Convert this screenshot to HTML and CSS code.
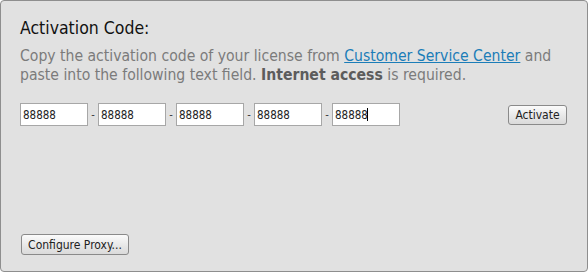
FILE: index.html
```html
<!DOCTYPE html>
<html lang="en">
<head>
  <meta charset="UTF-8" />
  <title>Activation Code</title>
  <link rel="stylesheet" href="styles.css">
</head>
<body>
  <div class="panel">
    <h1>Activation Code:</h1>
    <p class="info">Copy the activation code of your license from <a href="#">Customer Service Center</a> and paste into the following text field. <b>Internet access</b> is required.</p>

    <div class="code-row">
      <input class="code" type="text" value="88888">
      <span class="dash">-</span>
      <input class="code" type="text" value="88888">
      <span class="dash">-</span>
      <input class="code" type="text" value="88888">
      <span class="dash">-</span>
      <input class="code" type="text" value="88888">
      <span class="dash">-</span>
      <span class="code-wrap">
        <input class="code" type="text" value="88888">
        <span class="caret"></span>
      </span>
      <button class="btn btn-activate">Activate</button>
    </div>

    <div class="footer">
      <button class="btn btn-proxy">Configure Proxy...</button>
    </div>
  </div>
</body>
</html>
```

FILE: styles.css
```css
:root {
  --bg: #e1e1e1;
  --frame: #8e8e8e;
  --text: #7b7b7b;
  --link: #1b7db8;
  --field-border: #a7a7a7;
}

* {
  box-sizing: border-box;
  margin: 0;
  padding: 0;
}

body {
  font-family: "DejaVu Sans Condensed", "DejaVu Sans", sans-serif;
  background: #ffffff;
}

.panel {
  width: 588px;
  height: 272px;
  background: var(--bg);
  border: 1px solid var(--frame);
  border-radius: 4px;
  padding: 16px 20px 16px 19px;
  display: flex;
  flex-direction: column;
}

h1 {
  font-size: 17.5px;
  font-weight: normal;
  line-height: 22px;
  color: #111;
}

.info {
  margin-top: 8px;
  font-size: 15.6px;
  line-height: 19px;
  color: var(--text);
}

.info a {
  color: var(--link);
}

.info b {
  color: #5c5c5c;
}

.code-row {
  margin-top: 18px;
  display: flex;
  align-items: center;
}

.code {
  width: 68px;
  height: 23px;
  border: 1px solid var(--field-border);
  background: #fff;
  font-family: inherit;
  font-size: 11.5px;
  color: #222;
  padding: 0 2px;
  outline: none;
}

.dash {
  width: 10px;
  text-align: center;
  font-size: 11px;
  color: #333;
}

.code-wrap {
  position: relative;
  display: flex;
}

.caret {
  position: absolute;
  left: 35px;
  top: 5px;
  width: 1px;
  height: 13px;
  background: #000;
}

.btn {
  font-family: inherit;
  font-size: 12px;
  color: #222;
  background: linear-gradient(#fbfbfb, #e6e6e6 60%, #dadada);
  border: 1px solid #8a8a8a;
  border-radius: 3px;
}

.btn-activate {
  margin-left: auto;
  margin-top: 1px;
  width: 59px;
  height: 20px;
}

.footer {
  margin-top: auto;
}

.btn-proxy {
  margin-left: 1px;
  width: 108px;
  height: 21px;
}
```
